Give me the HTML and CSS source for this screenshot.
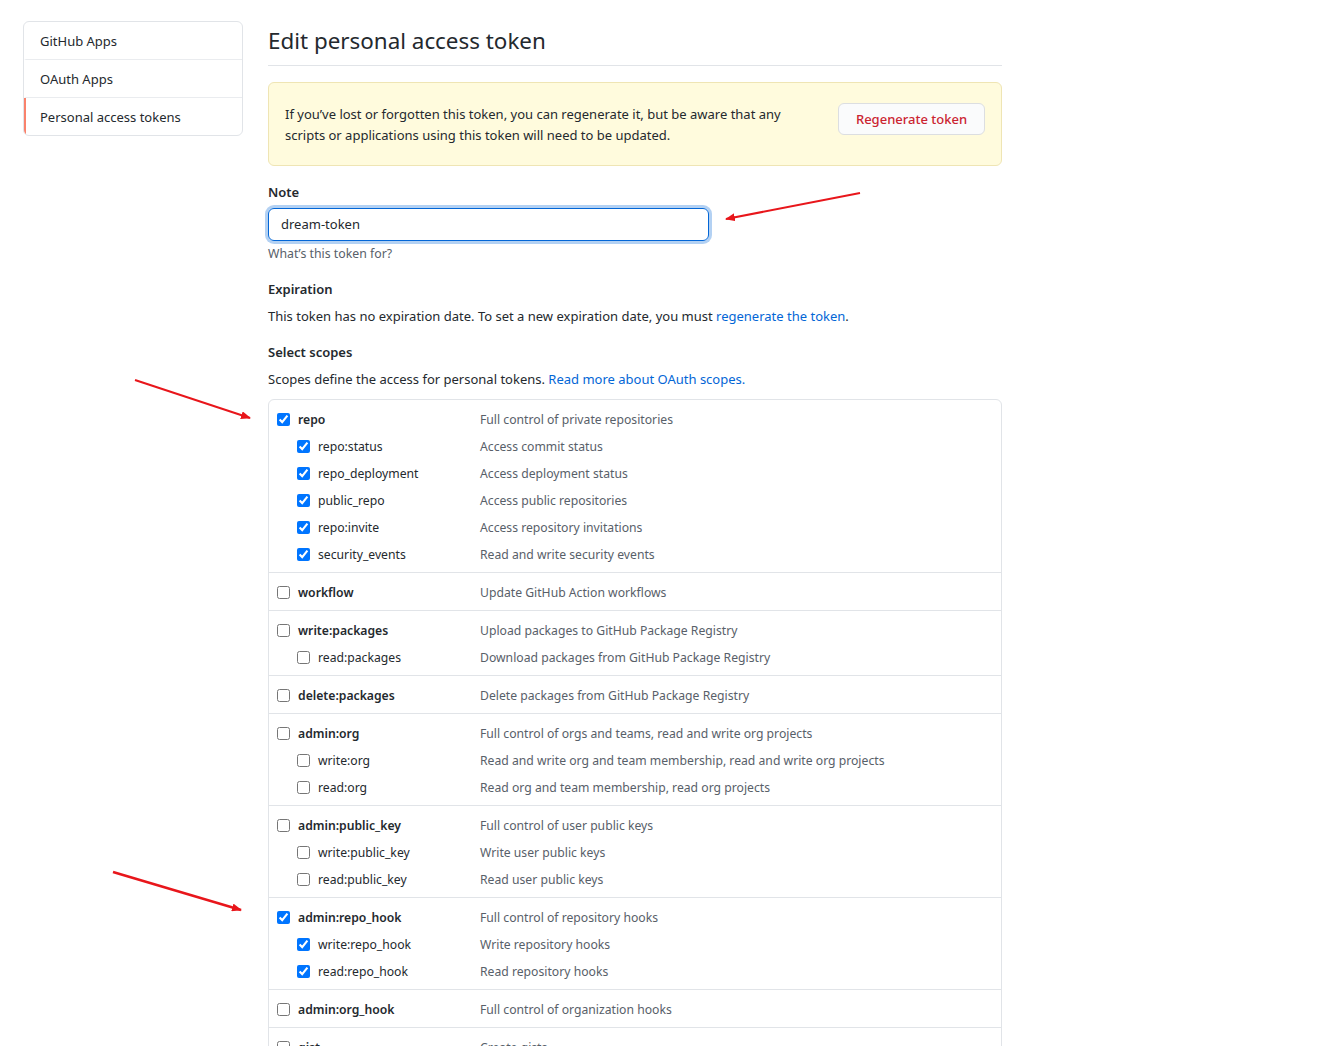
FILE: index.html
```html
<!DOCTYPE html>
<html>
<head>
<meta charset="utf-8">
<link rel="stylesheet" href="styles.css">
</head>
<body>
<div class="page">
  <nav class="menu">
    <a class="menu-item">GitHub Apps</a>
    <a class="menu-item">OAuth Apps</a>
    <a class="menu-item selected">Personal access tokens</a>
  </nav>
  <main class="content">
    <h2 class="subhead">Edit personal access token</h2>
    <div class="flash">
      <p class="flash-text">If you’ve lost or forgotten this token, you can regenerate it, but be aware that any scripts or applications using this token will need to be updated.</p>
      <button class="btn-danger">Regenerate token</button>
    </div>

    <div class="field">
      <label class="label">Note</label>
      <div class="input">dream-token</div>
      <p class="note">What’s this token for?</p>
    </div>

    <div class="field">
      <div class="label label-text">Expiration</div>
      <p class="text">This token has no expiration date. To set a new expiration date, you must <a class="link">regenerate the token</a>.</p>
    </div>

    <div class="field field-tight">
      <div class="label label-text">Select scopes</div>
      <p class="text">Scopes define the access for personal tokens. <a class="link">Read more about OAuth scopes.</a></p>
    </div>

    <div class="scopes">
      <div class="group">
        <div class="row top"><span class="name"><input type="checkbox" checked>repo</span><span class="desc">Full control of private repositories</span></div>
        <div class="row sub"><span class="name"><input type="checkbox" checked>repo:status</span><span class="desc">Access commit status</span></div>
        <div class="row sub"><span class="name"><input type="checkbox" checked>repo_deployment</span><span class="desc">Access deployment status</span></div>
        <div class="row sub"><span class="name"><input type="checkbox" checked>public_repo</span><span class="desc">Access public repositories</span></div>
        <div class="row sub"><span class="name"><input type="checkbox" checked>repo:invite</span><span class="desc">Access repository invitations</span></div>
        <div class="row sub"><span class="name"><input type="checkbox" checked>security_events</span><span class="desc">Read and write security events</span></div>
      </div>
      <div class="group">
        <div class="row top"><span class="name"><input type="checkbox">workflow</span><span class="desc">Update GitHub Action workflows</span></div>
      </div>
      <div class="group">
        <div class="row top"><span class="name"><input type="checkbox">write:packages</span><span class="desc">Upload packages to GitHub Package Registry</span></div>
        <div class="row sub"><span class="name"><input type="checkbox">read:packages</span><span class="desc">Download packages from GitHub Package Registry</span></div>
      </div>
      <div class="group">
        <div class="row top"><span class="name"><input type="checkbox">delete:packages</span><span class="desc">Delete packages from GitHub Package Registry</span></div>
      </div>
      <div class="group">
        <div class="row top"><span class="name"><input type="checkbox">admin:org</span><span class="desc">Full control of orgs and teams, read and write org projects</span></div>
        <div class="row sub"><span class="name"><input type="checkbox">write:org</span><span class="desc">Read and write org and team membership, read and write org projects</span></div>
        <div class="row sub"><span class="name"><input type="checkbox">read:org</span><span class="desc">Read org and team membership, read org projects</span></div>
      </div>
      <div class="group">
        <div class="row top"><span class="name"><input type="checkbox">admin:public_key</span><span class="desc">Full control of user public keys</span></div>
        <div class="row sub"><span class="name"><input type="checkbox">write:public_key</span><span class="desc">Write user public keys</span></div>
        <div class="row sub"><span class="name"><input type="checkbox">read:public_key</span><span class="desc">Read user public keys</span></div>
      </div>
      <div class="group">
        <div class="row top"><span class="name"><input type="checkbox" checked>admin:repo_hook</span><span class="desc">Full control of repository hooks</span></div>
        <div class="row sub"><span class="name"><input type="checkbox" checked>write:repo_hook</span><span class="desc">Write repository hooks</span></div>
        <div class="row sub"><span class="name"><input type="checkbox" checked>read:repo_hook</span><span class="desc">Read repository hooks</span></div>
      </div>
      <div class="group">
        <div class="row top"><span class="name"><input type="checkbox">admin:org_hook</span><span class="desc">Full control of organization hooks</span></div>
      </div>
      <div class="group">
        <div class="row top"><span class="name"><input type="checkbox">gist</span><span class="desc">Create gists</span></div>
      </div>
    </div>
  </main>
</div>

<svg class="arrows" width="1326" height="1046" viewBox="0 0 1326 1046">
  <defs>
    <marker id="head" markerWidth="10" markerHeight="8" refX="9" refY="4" orient="auto" markerUnits="userSpaceOnUse">
      <path d="M0 0 L10 4 L0 8 Z" fill="#e8161b"/>
    </marker>
  </defs>
  <line x1="860" y1="193" x2="726" y2="219" stroke="#e8161b" stroke-width="2" marker-end="url(#head)"/>
  <line x1="135" y1="380" x2="250" y2="418" stroke="#e8161b" stroke-width="2" marker-end="url(#head)"/>
  <line x1="113" y1="872" x2="241" y2="910" stroke="#e8161b" stroke-width="2.5" marker-end="url(#head)"/>
</svg>
</body>
</html>
```

FILE: styles.css
```css
* { box-sizing: border-box; }
html, body { margin: 0; padding: 0; background: #fff; }
body {
  font-family: "Noto Sans", "Open Sans", sans-serif;
  font-size: 13px;
  line-height: 21px;
  color: #24292e;
  overflow: hidden;
  height: 1046px;
}
.page {
  display: flex;
  align-items: flex-start;
  padding: 21px 0 0 23px;
  gap: 25px;
}
.menu {
  width: 220px;
  border: 1px solid #e1e4e8;
  border-radius: 6px;
  display: flex;
  flex-direction: column;
  overflow: hidden;
}
.menu-item {
  display: block;
  padding: 9px 16px 7px 14px;
  border-bottom: 1px solid #eaecef;
  color: #24292e;
  border-left: 2px solid transparent;
}
.menu-item:last-child { border-bottom: 0; height: 37px; }
.menu-item.selected { border-left-color: #f9826c; }

.content { width: 734px; margin-top: 2px; }
.subhead {
  margin: 0 0 16px;
  font-size: 22.4px;
  font-weight: 400;
  line-height: 36px;
  padding-bottom: 6px;
  border-bottom: 1px solid #e1e4e8;
}
.flash {
  display: flex;
  justify-content: space-between;
  align-items: flex-start;
  background: #fffbdd;
  border: 1px solid #efe5b4;
  border-radius: 6px;
  padding: 21px 16px 19px;
}
.flash-text { margin: 0; width: 520px; }
.btn-danger {
  font-family: inherit;
  font-size: 13px;
  font-weight: 500;
  line-height: 19px;
  color: #cb2431;
  background: #fafbfc;
  border: 1px solid #dcdee1;
  border-radius: 6px;
  padding: 6px 0 5px;
  width: 147px;
  white-space: nowrap;
  margin-top: -1px;
}
.field { margin-top: 16px; }
.field-tight { margin-top: 15px; }
.label { display: block; font-weight: 600; margin-bottom: 5px; }
.label-text { margin-bottom: 6px; }
.input {
  width: 441px;
  height: 33px;
  padding: 5px 12px;
  line-height: 21px;
  border: 1px solid #0366d6;
  border-radius: 6px;
  box-shadow: 0 0 0 3px rgba(3, 102, 214, 0.3);
  color: #24292e;
}
.note { margin: 4px 0 0; font-size: 12.3px; line-height: 18px; color: #586069; }
.text { margin: 0; }
.link { color: #0366d6; text-decoration: none; }

.scopes {
  margin-top: 9px;
  border: 1px solid #e1e4e8;
  border-radius: 6px;
  font-size: 12.2px;
}
.group {
  padding: 6px 8px 4px;
  border-bottom: 1px solid #e1e4e8;
}
.row {
  display: flex;
  height: 27px;
  align-items: center;
}
.name {
  width: 203px;
  display: flex;
  align-items: center;
  gap: 8px;
  color: #24292e;
}
.row.top .name { font-weight: 600; }
.row.sub .name { padding-left: 20px; }
.name input { margin: 0; width: 13px; height: 13px; }
.desc { color: #586069; }

.arrows { position: absolute; left: 0; top: 0; pointer-events: none; }
```
